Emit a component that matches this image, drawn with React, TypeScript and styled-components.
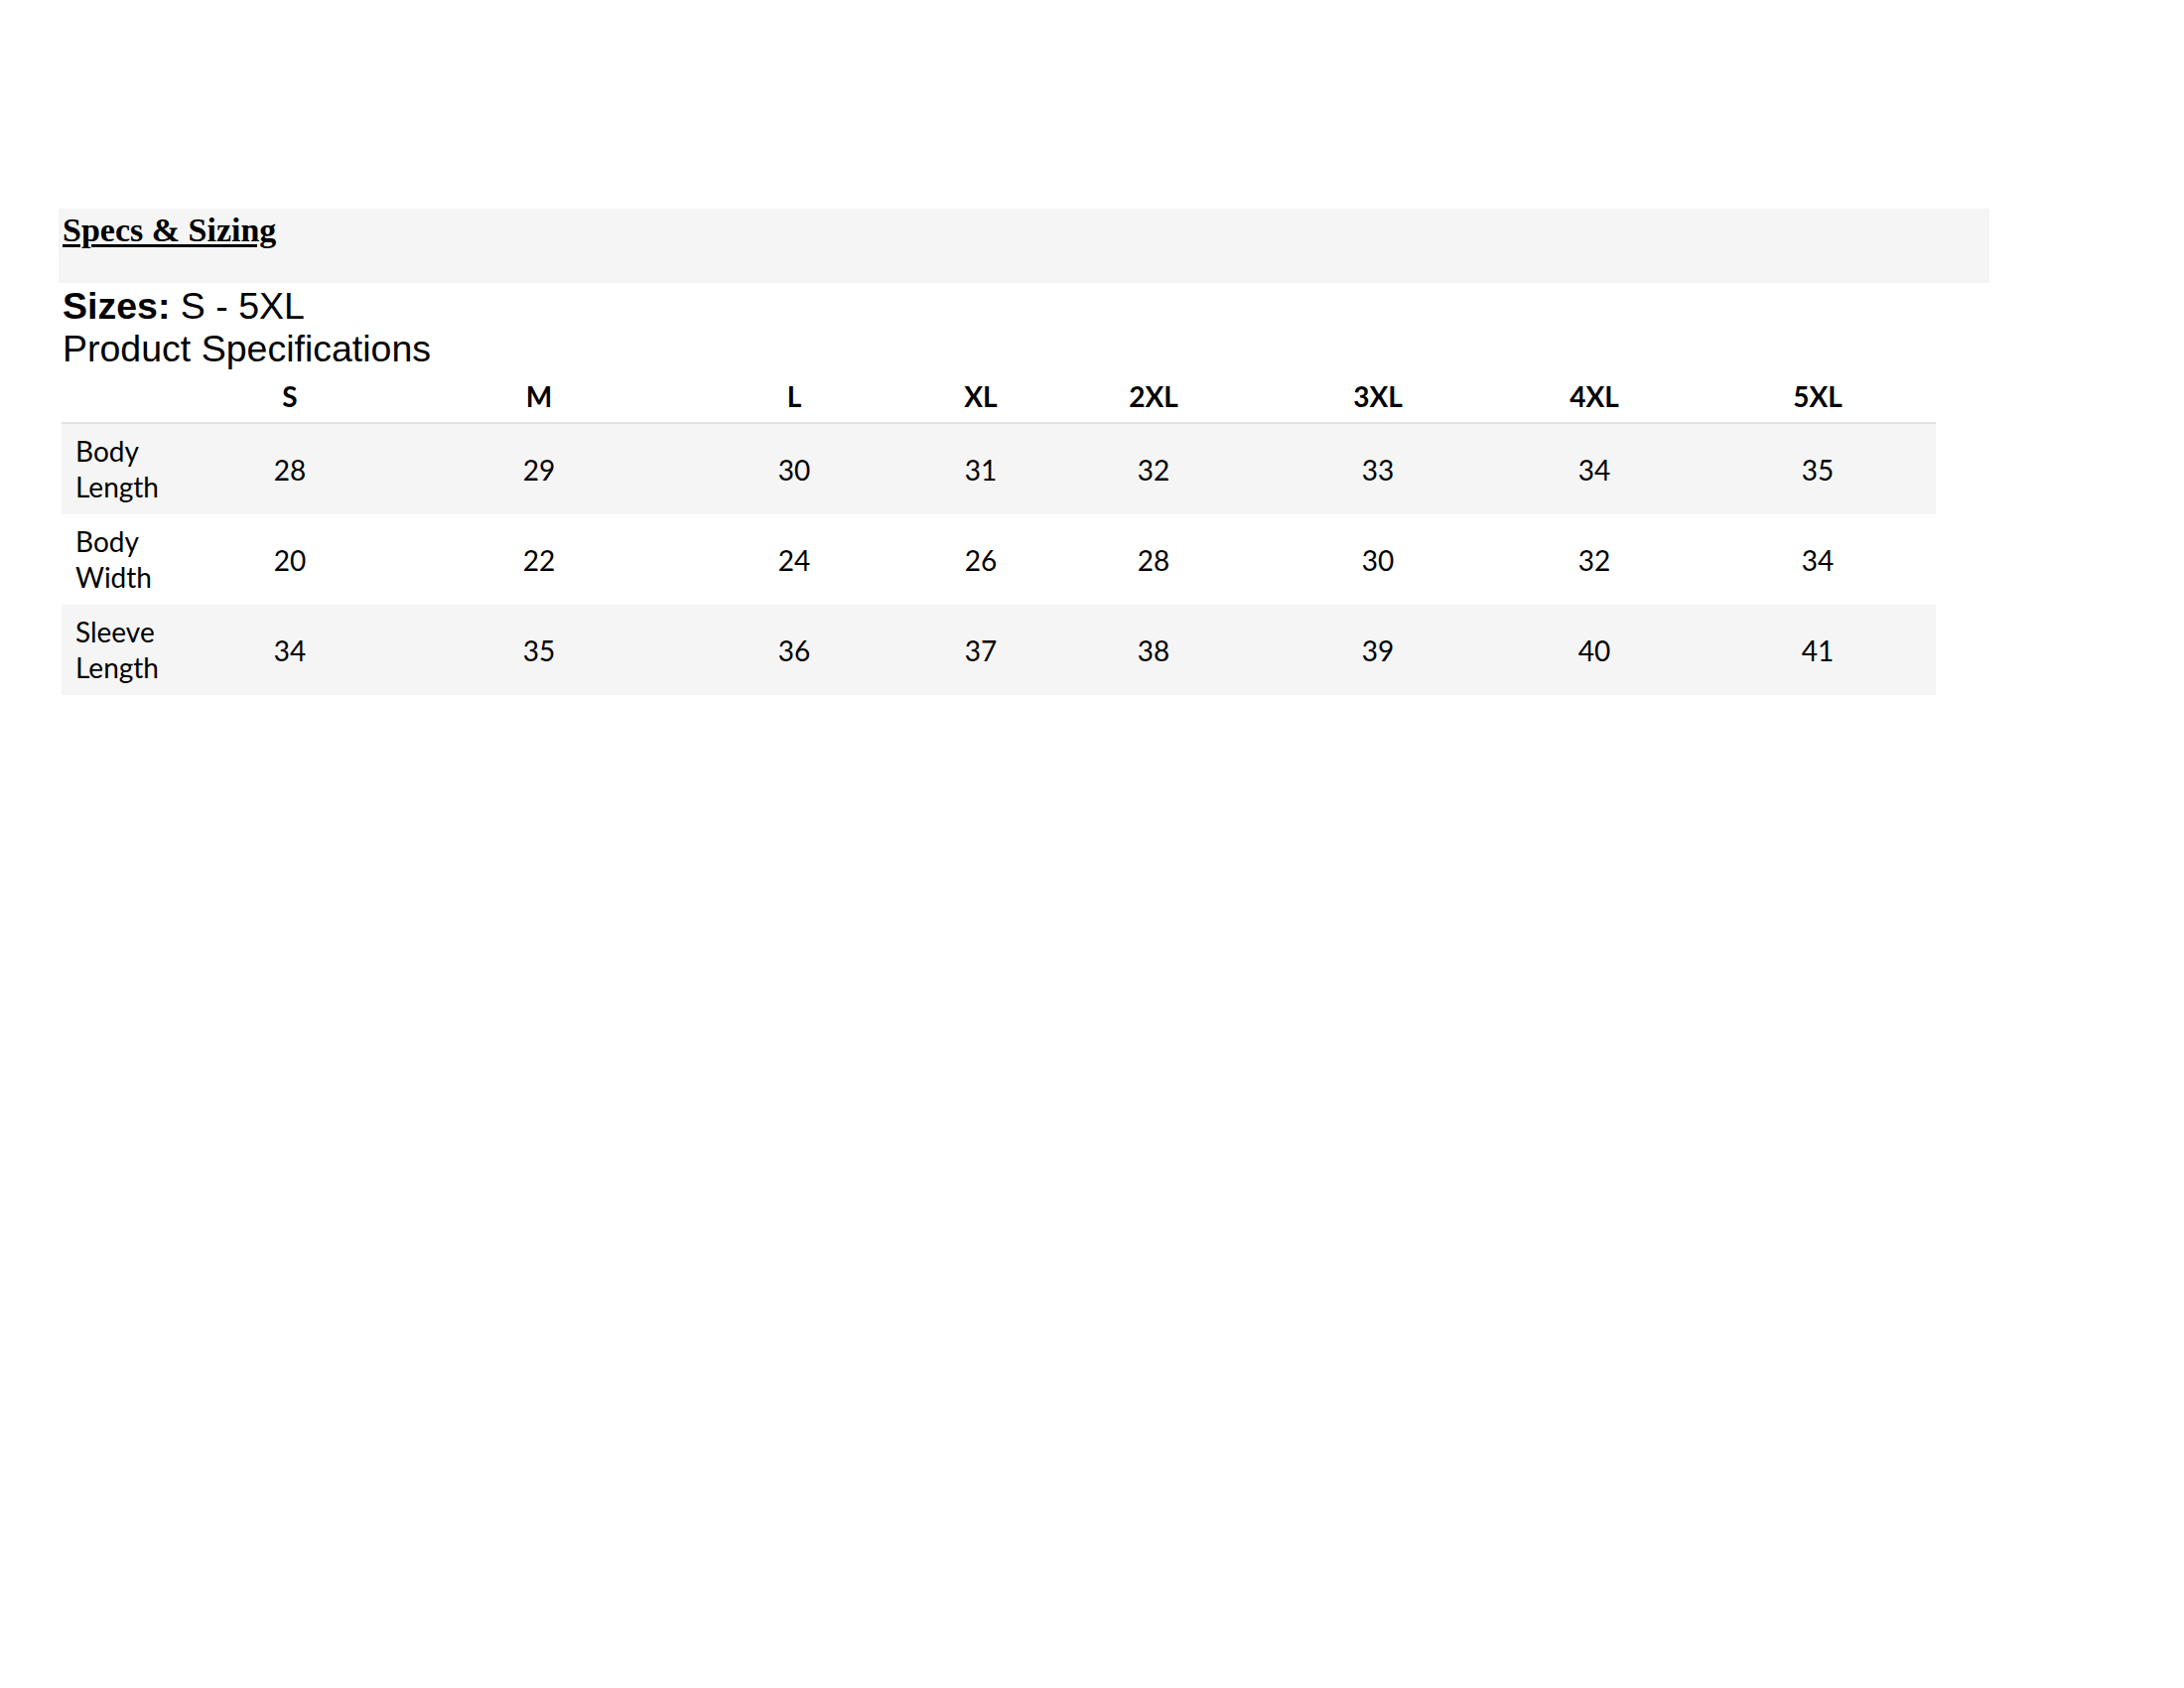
import React from "react";
import styled, { createGlobalStyle } from "styled-components";

const Global = createGlobalStyle`
  html, body { margin: 0; padding: 0; background: #ffffff; }
  body { font-family: "Liberation Sans", Arial, sans-serif; color: #000; }
`;

const Page = styled.div`
  padding: 210px 0 0 59px;
  width: 2200px;
  min-height: 1700px;
  box-sizing: border-box;
`;

const HeaderBar = styled.div`
  width: 1945px;
  height: 75px;
  background: #f5f5f5;
  padding: 5px 0 0 4px;
  box-sizing: border-box;
`;

const Heading = styled.span`
  font-family: "Liberation Serif", "Times New Roman", serif;
  font-weight: 700;
  font-size: 34px;
  line-height: 1;
  text-decoration: underline;
  text-decoration-thickness: 3px;
  text-underline-offset: 3px;
`;

const Intro = styled.div`
  margin-left: 4px;
  padding-top: 2px;
  font-family: "Liberation Sans", Arial, sans-serif;
  font-size: 37.5px;
  line-height: 43px;
`;

const Line = styled.div``;

const Strong = styled.span`
  font-weight: 700;
`;

const Table = styled.div`
  margin-left: 3px;
  width: 1888px;
  font-family: Lato, "Open Sans", sans-serif;
  font-size: 28px;
`;

const Row = styled.div<{ $shade?: boolean; $head?: boolean }>`
  display: grid;
  grid-template-columns: 108px 244px 258px 256px 120px 228px 224px 212px 238px;
  align-items: center;
  height: ${(p) => (p.$head ? "52px" : "91px")};
  background: ${(p) => (p.$shade ? "#f5f5f5" : "transparent")};
  border-bottom: ${(p) => (p.$head ? "2px solid #e2e2e2" : "none")};
  font-weight: ${(p) => (p.$head ? 700 : 400)};
`;

const Label = styled.div`
  padding-left: 14px;
  line-height: 36px;
  margin-top: -2px;
`;

const Cell = styled.div`
  text-align: center;
`;

const sizes = ["S", "M", "L", "XL", "2XL", "3XL", "4XL", "5XL"];
const rows: { label: [string, string]; values: number[] }[] = [
  { label: ["Body", "Length"], values: [28, 29, 30, 31, 32, 33, 34, 35] },
  { label: ["Body", "Width"], values: [20, 22, 24, 26, 28, 30, 32, 34] },
  { label: ["Sleeve", "Length"], values: [34, 35, 36, 37, 38, 39, 40, 41] },
];

export default function App() {
  return (
    <>
      <Global />
      <Page>
        <HeaderBar>
          <Heading>Specs &amp; Sizing</Heading>
        </HeaderBar>
        <Intro>
          <Line>
            <Strong>Sizes:</Strong> S - 5XL
          </Line>
          <Line>Product Specifications</Line>
        </Intro>
        <Table>
          <Row $head>
            <Label />
            {sizes.map((s) => (
              <Cell key={s}>{s}</Cell>
            ))}
          </Row>
          {rows.map((r, i) => (
            <Row key={r.label.join(" ")} $shade={i % 2 === 0}>
              <Label>
                {r.label[0]}
                <br />
                {r.label[1]}
              </Label>
              {r.values.map((v, j) => (
                <Cell key={j}>{v}</Cell>
              ))}
            </Row>
          ))}
        </Table>
      </Page>
    </>
  );
}
